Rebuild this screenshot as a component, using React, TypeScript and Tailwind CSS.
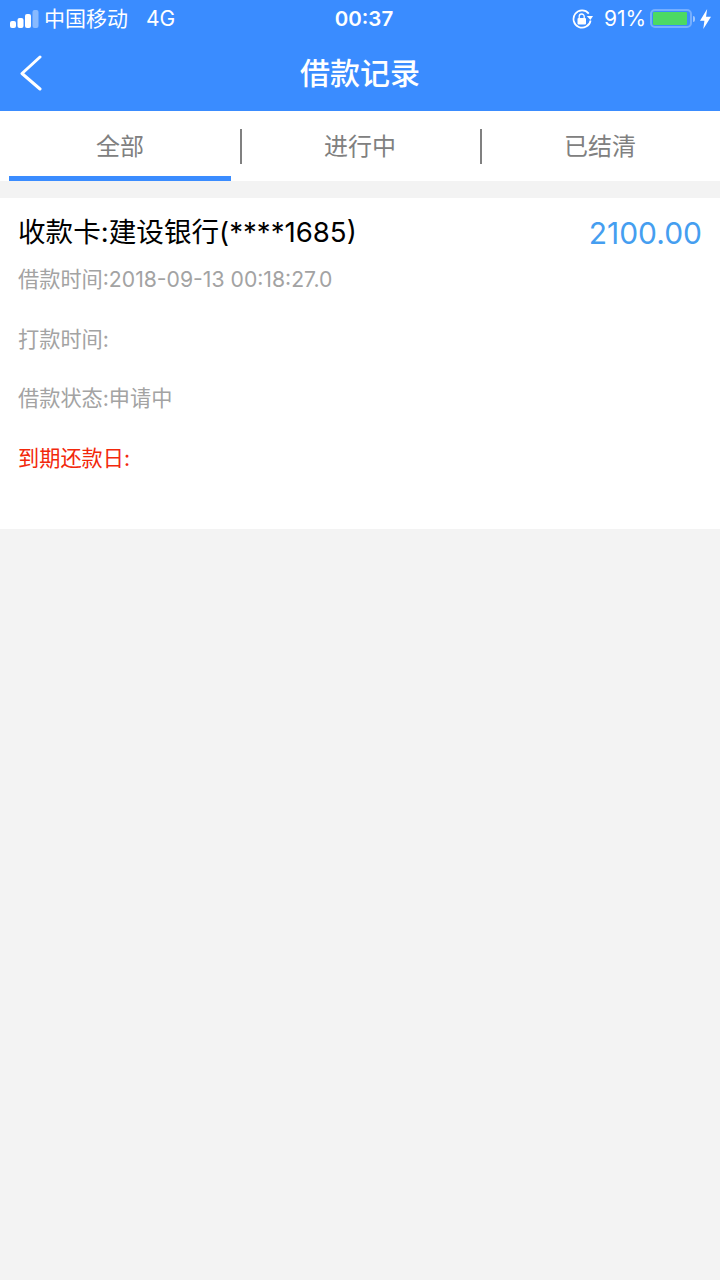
import React from 'react';

const FONT = "font-['Inter','Noto_Sans_CJK_SC',sans-serif]";

function StatusBar() {
  return (
    <div className="flex h-[37px] items-center text-white">
      <div className="flex w-[250px] items-center pl-[10px]">
        <svg width="29" height="18" viewBox="0 0 29 18" className="mr-[5px]">
          <rect x="0" y="11" width="6" height="7" rx="2" fill="#fff" />
          <rect x="7.5" y="8" width="6" height="10" rx="2" fill="#fff" />
          <rect x="15" y="4" width="6" height="14" rx="2" fill="#fff" />
          <rect x="22.5" y="0" width="6" height="18" rx="2" fill="#fff" fillOpacity="0.4" />
        </svg>
        <span className="text-[21px] leading-none">中国移动</span>
        <span className="ml-[18px] text-[21px] leading-none">4G</span>
      </div>
      <div className="w-[228px] pt-[1px] text-center text-[20.5px] font-semibold leading-none">00:37</div>
      <div className="flex flex-1 items-center pl-[94px]">
        <svg width="22" height="20" viewBox="0 0 22 20" fill="none">
          <path d="M18.6 11.5 A8.6 8.6 0 1 1 16.8 4.6" stroke="#fff" strokeWidth="1.7" />
          <path d="M14.8 7 L21 7 L18.4 11 Z" fill="#fff" />
          <rect x="5.5" y="9" width="8.5" height="6.5" rx="1" fill="#fff" />
          <path d="M7.2 9 V7.5 a2.5 2.5 0 0 1 5 0 V9" stroke="#fff" strokeWidth="1.3" />
        </svg>
        <span className="ml-[10px] text-[21px] leading-none">91%</span>
        <div className="ml-[4px] flex h-[19px] w-[42px] items-center rounded-[5px] border-2 border-white/30 py-[1px] pl-[1px] pr-[3px]">
          <div className="h-full w-full rounded-[1px] bg-[#4cd964]" />
        </div>
        <div className="ml-[1px] h-[6px] w-[2px] rounded-r-sm bg-white/50" />
        <svg width="11" height="20" viewBox="0 0 10 18" className="ml-[5px]">
          <path d="M6.5 0 L0 10.5 H4 L3 18 L10 7 H5.5 Z" fill="#fff" />
        </svg>
      </div>
    </div>
  );
}

function Header() {
  return (
    <div className="bg-[#3a8cff]">
      <StatusBar />
      <div className="relative flex h-[74px] items-center justify-center pb-[3px]">
        <svg width="24" height="36" viewBox="0 0 24 36" fill="none" className="absolute left-[19px] top-[18px]">
          <path d="M21 2 L3 18.5 L21 34" stroke="#fff" strokeWidth="3" strokeLinecap="round" strokeLinejoin="round" />
        </svg>
        <span className="text-[30px] font-medium leading-none text-white">借款记录</span>
      </div>
    </div>
  );
}

function Tabs() {
  const tabs = ['全部', '进行中', '已结清'];
  return (
    <div className="flex h-[70px] bg-white">
      {tabs.map((t, i) => (
        <div key={t} className="relative flex w-[240px] items-center justify-center pt-[1px]">
          <span className="text-[24px] leading-none text-[#808080]">{t}</span>
          {i < 2 && <div className="absolute right-[-2px] top-[18px] h-[35px] w-[2px] bg-[#808080]" />}
          {i === 0 && <div className="absolute bottom-0 left-[9px] h-[5px] w-[222px] bg-[#3a8cff]" />}
        </div>
      ))}
    </div>
  );
}

function RecordCard() {
  return (
    <div className="mt-[17px] h-[331px] bg-white px-[18px]">
      <div className="flex h-[70px] items-center justify-between pb-[1px]">
        <span className="text-[27.6px] leading-none text-black">收款卡:建设银行(****1685)</span>
        <span className="text-[30px] leading-none text-[#459ef0]">2100.00</span>
      </div>
      <div className="text-[21.2px] leading-[60px] text-[#a3a3a3] [&>div]:h-[59.6px]">
        <div className="mt-[-19px]">借款时间:2018-09-13 00:18:27.0</div>
        <div>打款时间:</div>
        <div>借款状态:申请中</div>
        <div className="text-[#f2280c]">到期还款日:</div>
      </div>
    </div>
  );
}

export default function App() {
  return (
    <div className={`${FONT} min-h-[1280px] bg-[#f3f3f3]`}>
      <Header />
      <Tabs />
      <RecordCard />
    </div>
  );
}
